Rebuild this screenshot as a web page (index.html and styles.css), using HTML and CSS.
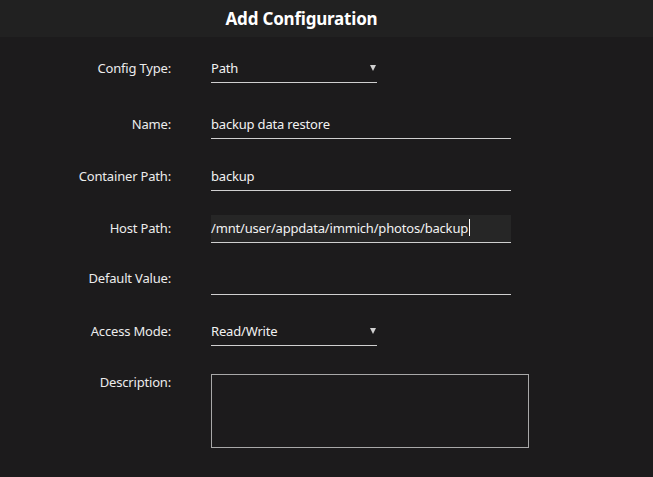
FILE: index.html
```html
<!DOCTYPE html>
<html>
<head>
<meta charset="utf-8">
<link rel="stylesheet" href="styles.css">
</head>
<body>
<div class="header"><h1 class="title">Add Configuration</h1></div>
<form class="form">
  <div class="row row-first">
    <label class="label">Config Type:</label>
    <div class="field select"><span class="value">Path</span><span class="arrow"></span></div>
  </div>
  <div class="row">
    <label class="label">Name:</label>
    <div class="field text"><span class="value">backup data restore</span></div>
  </div>
  <div class="row">
    <label class="label">Container Path:</label>
    <div class="field text"><span class="value">backup</span></div>
  </div>
  <div class="row">
    <label class="label">Host Path:</label>
    <div class="field text focused"><span class="value">/mnt/user/appdata/immich/photos/backup</span><span class="caret"></span></div>
  </div>
  <div class="row row-default">
    <label class="label label-high">Default Value:</label>
    <div class="field text"><span class="value"></span></div>
  </div>
  <div class="row row-access">
    <label class="label">Access Mode:</label>
    <div class="field select"><span class="value">Read/Write</span><span class="arrow"></span></div>
  </div>
  <div class="row row-desc">
    <label class="label label-top">Description:</label>
    <div class="textarea"></div>
  </div>
</form>
</body>
</html>
```

FILE: styles.css
```css
html, body {
  margin: 0;
  padding: 0;
  background: #1c1b1c;
  color: #f0f0f0;
  font-family: "Noto Sans", "Open Sans", sans-serif;
  font-size: 13px;
}
.header {
  height: 37px;
  background: #212121;
  display: flex;
  align-items: center;
  justify-content: center;
  padding-right: 50px;
}
.title {
  margin: 0;
  font-size: 17px;
  font-weight: 700;
  color: #ffffff;
  letter-spacing: -0.2px;
}
.form {
  display: flex;
  flex-direction: column;
  padding-top: 18px;
  letter-spacing: -0.18px;
}
.row {
  display: grid;
  grid-template-columns: 171px auto;
  column-gap: 40px;
  align-items: center;
  margin-bottom: 24px;
}
.row-first { margin-bottom: 28px; }
.row-default { margin-bottom: 23px; }
.label {
  text-align: right;
  color: #ececec;
  margin-bottom: 3px;
}
.label-high { align-self: start; margin-top: 2px; }
.label-top { align-self: start; margin-top: -1px; }
.field {
  height: 25px;
  padding-bottom: 2px;
  border-bottom: 1px solid #cfcfcf;
  display: flex;
  align-items: center;
  box-sizing: content-box;
}
.text { width: 300px; }
.select { width: 166px; justify-content: space-between; }
.focused { background: #262626; }
.value { color: #f2f2f2; white-space: nowrap; }
.caret {
  width: 1px;
  height: 17px;
  background: #ffffff;
  margin-left: 1px;
}
.arrow {
  width: 0;
  height: 0;
  border-left: 3px solid transparent;
  border-right: 3px solid transparent;
  border-top: 6px solid #d0d0d0;
  margin-right: 1px;
}
.row-desc { margin-top: 4px; }
.textarea {
  width: 316px;
  height: 72px;
  border: 1px solid #a8a8a8;
}
```
